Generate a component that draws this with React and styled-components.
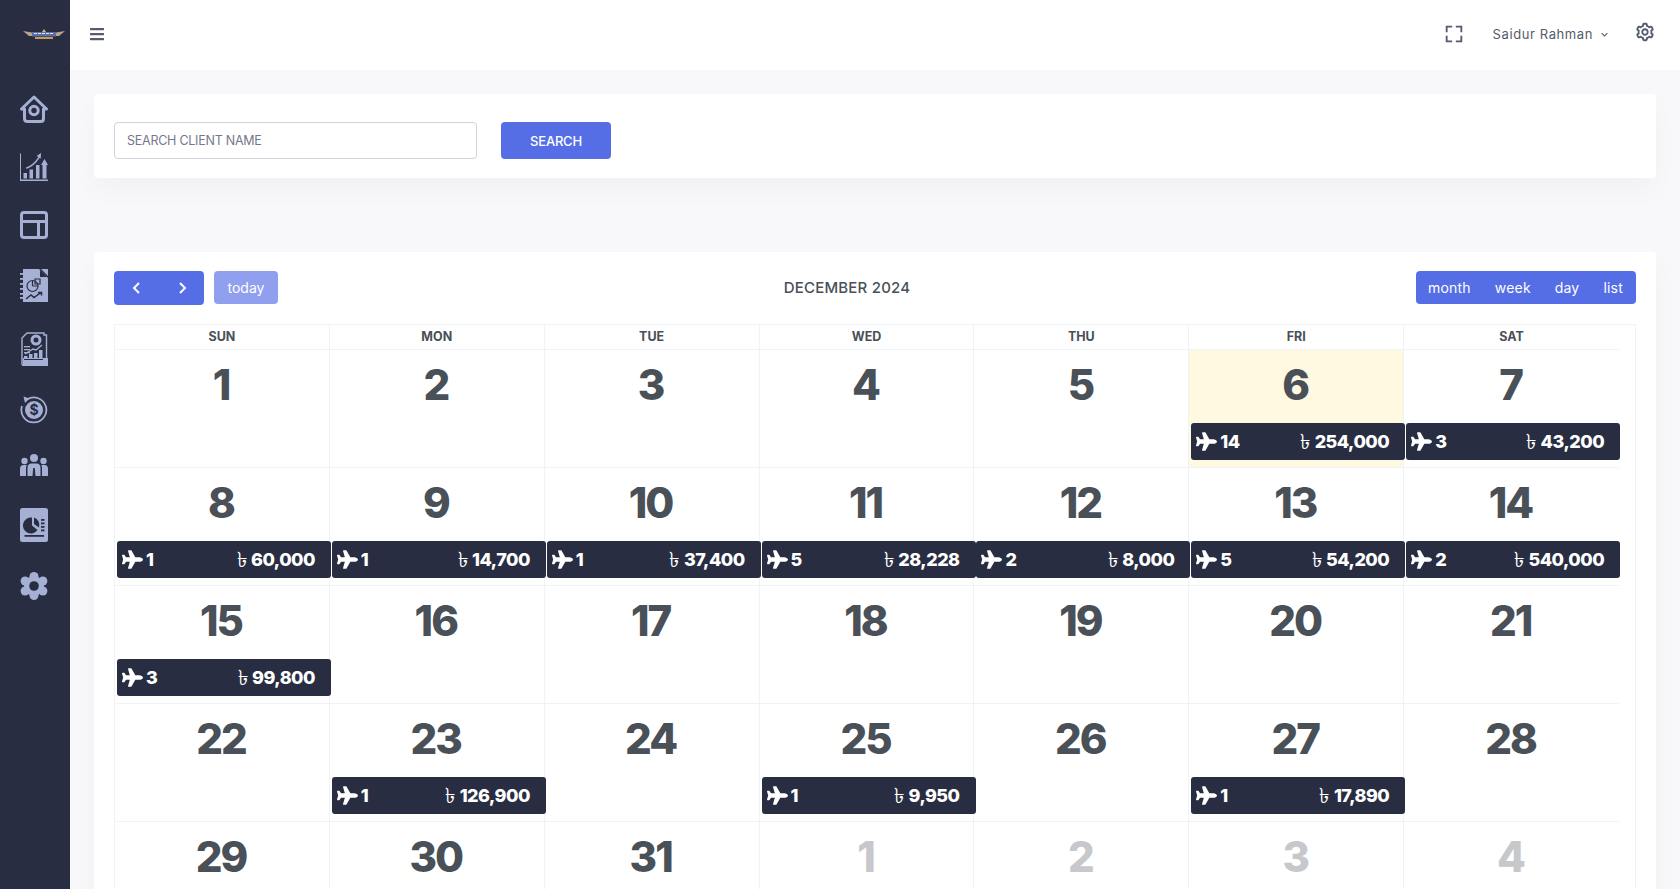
import React from 'react';
import styled, { createGlobalStyle } from 'styled-components';
import { FaBars, FaPlane } from 'react-icons/fa';
import { BiCog, BiFullscreen, BiChevronLeft, BiChevronRight } from 'react-icons/bi';
import { MdKeyboardArrowDown } from 'react-icons/md';

const COLOR = {
  SIDEBAR: '#282d41',
  ICON: '#a6b0d4',
  PRIMARY: '#556ee6',
  TEXT: '#495057',
  MUTED: '#555b6d',
  LINE: '#eff2f7',
  BG: '#f8f8fb',
  TODAY: '#fff9e1',
};

const GlobalStyle = createGlobalStyle`
  html, body {
    margin: 0;
    height: 100%;
    overflow: hidden;
    background: ${COLOR.BG};
    font-family: Inter, "Noto Sans", "DejaVu Sans", sans-serif;
    color: ${COLOR.TEXT};
  }
  * { box-sizing: border-box; }
`;

const Page = styled.div`
  display: flex;
  height: 100vh;
  overflow: hidden;
`;

const Sidebar = styled.aside`
  width: 70px;
  flex: none;
  background: ${COLOR.SIDEBAR};
  display: flex;
  flex-direction: column;
  align-items: center;
  padding-right: 2px;
`;

const LogoBox = styled.div`
  height: 95px;
  width: 100%;
  padding-top: 29px;
  padding-left: 23px;
  svg { display: block; }
`;

const Nav = styled.nav`
  display: flex;
  flex-direction: column;
  align-items: center;
  gap: 30px;
  color: ${COLOR.ICON};
  svg { display: block; }
`;

const Main = styled.div`
  flex: 1;
  min-width: 0;
  display: flex;
  flex-direction: column;
`;

const Header = styled.header`
  height: 70px;
  flex: none;
  background: #fff;
  display: flex;
  align-items: center;
  justify-content: space-between;
  padding: 0 24px 0 19px;
  color: ${COLOR.MUTED};
`;

const HeaderRight = styled.div`
  display: flex;
  align-items: center;
`;

const IconSlot = styled.div`
  display: flex;
  color: ${COLOR.MUTED};
  margin-top: ${({ $top }) => $top || 0}px;
`;

const UserName = styled.div`
  display: flex;
  align-items: center;
  margin: -2px 23px 0 28px;
  font-size: 13px;
  letter-spacing: 0.6px;
`;

const Content = styled.main`
  padding: 24px;
`;

const Card = styled.section`
  background: #fff;
  border-radius: 4px;
  box-shadow: 0 12px 24px rgba(18, 38, 63, 0.03);
`;

const SearchCard = styled(Card)`
  display: flex;
  gap: 24px;
  padding: 28px 20px;
  height: 84px;
  margin-bottom: 74px;
`;

const SearchInput = styled.input`
  width: 363px;
  height: 37px;
  border: 1px solid #ced4da;
  border-radius: 4px;
  padding: 0 12px;
  font: 400 12.5px Inter, sans-serif;
  letter-spacing: -0.25px;
  color: ${COLOR.TEXT};
  &::placeholder { color: #74788d; opacity: 1; }
`;

const SearchButton = styled.button`
  width: 110px;
  height: 37px;
  border: 0;
  border-radius: 4px;
  background: ${COLOR.PRIMARY};
  color: #fff;
  font: 500 13px Inter, sans-serif;
  letter-spacing: -0.2px;
`;

const CalendarCard = styled(Card)`
  padding: 19px 20px 0;
`;

const Toolbar = styled.div`
  display: flex;
  justify-content: space-between;
  align-items: flex-start;
  height: 34px;
  margin-bottom: 19px;
`;

const ToolbarGroup = styled.div`
  display: flex;
  gap: 10px;
`;

const NavButtons = styled.div`
  width: 90px;
  height: 34px;
  background: ${COLOR.PRIMARY};
  border-radius: 4px;
  display: flex;
  align-items: center;
  justify-content: space-around;
  color: #fff;
`;

const TodayButton = styled.div`
  width: 64px;
  height: 33px;
  background: ${COLOR.PRIMARY};
  opacity: 0.65;
  border-radius: 4px;
  color: #fff;
  font-size: 14px;
  display: flex;
  align-items: center;
  justify-content: center;
`;

const MonthTitle = styled.h2`
  margin: 7px 0 0;
  font-size: 15px;
  line-height: 20px;
  font-weight: 500;
  letter-spacing: 0.2px;
  color: ${COLOR.TEXT};
`;

const ViewSwitch = styled.div`
  width: 220px;
  height: 33px;
  background: ${COLOR.PRIMARY};
  border-radius: 4px;
  display: flex;
  align-items: center;
  justify-content: space-between;
  padding: 0 13px 0 12px;
  color: #fff;
  font-size: 14px;
  letter-spacing: 0.2px;
`;

const CalendarTable = styled.div`
  border: 1px solid ${COLOR.LINE};
  border-bottom: 0;
  padding-right: 16px;
`;

const Grid = styled.div`
  display: grid;
  grid-template-columns: repeat(7, 1fr);
`;

const DayName = styled.div`
  height: 25px;
  padding-bottom: 2px;
  border-bottom: 1px solid ${COLOR.LINE};
  border-right: ${({ $last }) => ($last ? 0 : `1px solid ${COLOR.LINE}`)};
  display: flex;
  align-items: center;
  justify-content: center;
  font-size: 12.5px;
  font-weight: 700;
  color: ${COLOR.TEXT};
`;

const DayCell = styled.div`
  height: 118px;
  min-width: 0;
  border-bottom: 1px solid ${COLOR.LINE};
  border-right: ${({ $last }) => ($last ? 0 : `1px solid ${COLOR.LINE}`)};
  background: ${({ $today }) => ($today ? COLOR.TODAY : 'transparent')};
`;

const DayNumber = styled.div`
  height: 73px;
  padding: 0 2px 5px 0;
  display: flex;
  align-items: center;
  justify-content: center;
  font-size: 42px;
  font-weight: 800;
  letter-spacing: -2px;
  color: ${({ $other }) => ($other ? '#c6c8cb' : COLOR.TEXT)};
`;

const EventBar = styled.div`
  position: relative;
  width: 214px;
  height: 37px;
  margin-left: 2px;
  padding: 0 16px 0 5px;
  background: ${COLOR.SIDEBAR};
  border-radius: 3px;
  display: flex;
  align-items: center;
  justify-content: space-between;
  color: #fff;
  font-size: 18px;
  line-height: 1;
  font-weight: 800;
  letter-spacing: -0.5px;
`;

const EventCount = styled.span`
  display: flex;
  align-items: center;
  gap: 3px;
`;

const EventAmount = styled.span`
  display: flex;
  align-items: center;
`;

const Taka = styled.span`
  font-size: 21px;
  line-height: 18px;
  font-weight: 400;
  margin-right: 5px;
`;

const HouseIcon = () => (
  <svg width="28" height="28" viewBox="0 0 28 28" fill="none" stroke="currentColor" strokeWidth="3" strokeLinejoin="round">
    <path d="M14 2L26.500 14H23.500V23.500Q23.500 26.500 20.500 26.500H7.500Q4.500 26.500 4.500 23.500V14H1.500Z" />
    <circle cx="14" cy="15.500" r="4.200" />
  </svg>
);

const ChartIcon = () => (
  <svg width="28" height="28" viewBox="0 0 28 28" fill="currentColor">
    <path d="M0 0.500H1V26.500H28V28H0Z" />
    <rect x="3.500" y="20" width="3.500" height="5.500" />
    <rect x="9.500" y="16.500" width="3.500" height="9" />
    <rect x="16" y="12" width="3.500" height="13.500" />
    <path d="M22.500 12H21L24.500 6L28 12H26.500V25.500H22.500Z" />
    <path d="M6 14.500Q13 12 18.500 4L16.500 3L21 0L20.800 5.500L19.500 5Q14 13.500 6.500 16Z" />
  </svg>
);

const LayoutIcon = () => (
  <svg width="28" height="28" viewBox="0 0 28 28" fill="none" stroke="currentColor" strokeWidth="3">
    <rect x="1.500" y="1.500" width="25" height="25" rx="2.500" />
    <path d="M1.500 10.500H26.500M18.500 10.500V26.500" />
  </svg>
);

const NotebookIcon = () => (
  <svg width="28" height="33" viewBox="0 0 28 33">
    <path d="M3 0H19L28 9V33H3Z" fill="currentColor" />
    <path d="M20 1L27 8H20Z" fill={COLOR.SIDEBAR} />
    <path d="M21 0L28 7V0Z" fill="currentColor" />
    <g fill="currentColor">
      <rect x="0" y="4" width="4" height="1.800" />
      <rect x="0" y="9" width="4" height="1.800" />
      <rect x="0" y="14" width="4" height="1.800" />
      <rect x="0" y="19" width="4" height="1.800" />
      <rect x="0" y="24" width="4" height="1.800" />
      <rect x="0" y="28" width="4" height="1.800" />
    </g>
    <g fill="none" stroke={COLOR.SIDEBAR} strokeWidth="1.200">
      <circle cx="12.500" cy="17" r="5.500" />
      <path d="M12.500 17V11.500M12.500 17H18" />
      <path d="M15 10H20V15H15Z" />
      <path d="M6 30L11 26L14 28.500L21 23.500M18 23.500H21.500V26.500" strokeWidth="1.500" />
    </g>
  </svg>
);

const ReportIcon = () => (
  <svg width="28" height="34" viewBox="0 0 28 34">
    <path d="M2 33V6L7 1H24V3H26.500V33.500H2" fill="none" stroke="currentColor" strokeWidth="1.400" />
    <path d="M3 26H28V34H3Z" fill="currentColor" />
    <circle cx="16" cy="8" r="5.500" fill="currentColor" />
    <circle cx="16" cy="8" r="2.500" fill={COLOR.SIDEBAR} />
    <g fill="currentColor">
      <rect x="4" y="14" width="6" height="1.300" />
      <rect x="4" y="17" width="6" height="1.300" />
      <rect x="4" y="20" width="6" height="1.300" />
      <rect x="4" y="24" width="3.500" height="4" />
      <rect x="9" y="22" width="3.500" height="6" />
      <rect x="14" y="21" width="3.500" height="7" />
      <rect x="19" y="18" width="3.500" height="10" />
    </g>
    <path d="M5 22L13 17L16 18L22 13" fill="none" stroke="currentColor" strokeWidth="1.400" />
    <rect x="4" y="27" width="19" height="1" fill={COLOR.SIDEBAR} />
  </svg>
);

const DollarIcon = () => (
  <svg width="28" height="28" viewBox="0 0 28 28">
    <path d="M7 3.500A12.500 12.500 0 1 1 2 10" fill="none" stroke="currentColor" strokeWidth="1.800" />
    <path d="M3.500 0.500L9.500 2.500L5 7Z" fill="currentColor" />
    <circle cx="14" cy="14" r="9" fill="currentColor" />
    <text x="14" y="18.800" textAnchor="middle" fontSize="14" fontWeight="700" fill={COLOR.SIDEBAR} fontFamily="Inter, sans-serif">$</text>
  </svg>
);

const UsersIcon = () => (
  <svg width="28" height="24" viewBox="0 0 28 24" fill="currentColor">
    <circle cx="14" cy="4" r="4" />
    <circle cx="4.500" cy="7" r="3.200" />
    <circle cx="23.500" cy="7" r="3.200" />
    <path d="M7.500 22V14Q7.500 9.500 11.500 9.500H16.500Q20.500 9.500 20.500 14V22H15.500L14.800 14H13.200L12.500 22Z" />
    <path d="M0 22V15Q0 11 3.500 11H6.800Q6 12.500 6 14V22Z" />
    <path d="M28 22V15Q28 11 24.500 11H21.200Q22 12.500 22 14V22Z" />
  </svg>
);

const DocIcon = () => (
  <svg width="28" height="34" viewBox="0 0 28 34">
    <rect width="28" height="34" rx="2.500" fill="currentColor" />
    <path d="M12 9.500V17.500L17.500 22A8 8 0 1 1 12 9.500Z" fill={COLOR.SIDEBAR} />
    <path d="M14 9.500A8 8 0 0 1 19 19.500L14 16Z" fill={COLOR.SIDEBAR} />
    <g fill={COLOR.SIDEBAR}>
      <rect x="21" y="11" width="3.500" height="1.800" />
      <rect x="21" y="14.500" width="3.500" height="1.800" />
      <rect x="21" y="18" width="3.500" height="1.800" />
      <rect x="21" y="21.500" width="3.500" height="1.800" />
      <rect x="4.500" y="27" width="19.500" height="1.800" />
    </g>
  </svg>
);

const GearIcon = () => (
  <svg width="28" height="28" viewBox="0 0 28 28">
    <g fill="currentColor">
      <circle cx="14" cy="14" r="10" />
      <circle cx="14" cy="4.500" r="4.500" />
      <circle cx="14" cy="23.500" r="4.500" />
      <circle cx="5.100" cy="9" r="4.500" />
      <circle cx="22.900" cy="9" r="4.500" />
      <circle cx="5.100" cy="19" r="4.500" />
      <circle cx="22.900" cy="19" r="4.500" />
    </g>
    <circle cx="14" cy="14" r="4.800" fill={COLOR.SIDEBAR} />
  </svg>
);

const Logo = () => (
  <svg width="42" height="11" viewBox="0 0 42 11">
    <path d="M0 2L9 3.500L12 7H6Z" fill="#b9a58c" />
    <path d="M42 2L33 3.500L30 7H36Z" fill="#b9a58c" />
    <rect x="9" y="3" width="24" height="4.500" fill="#5c6fa8" />
    <path d="M19 3L21 0L23 3Z" fill="#c7b79a" />
    <path d="M11 4.500H31" stroke="#dde2f0" strokeWidth="1" strokeDasharray="3 1" />
    <rect x="12" y="8" width="18" height="2" fill="#c79a4d" />
  </svg>
);

const WEEK_DAYS = ['SUN', 'MON', 'TUE', 'WED', 'THU', 'FRI', 'SAT'];

const EVENTS = {
  6: [14, '254,000'],
  7: [3, '43,200'],
  8: [1, '60,000'],
  9: [1, '14,700'],
  10: [1, '37,400'],
  11: [5, '28,228'],
  12: [2, '8,000'],
  13: [5, '54,200'],
  14: [2, '540,000'],
  15: [3, '99,800'],
  23: [1, '126,900'],
  25: [1, '9,950'],
  27: [1, '17,890'],
};

const DAYS = [
  ...Array.from({ length: 31 }, (_, i) => ({ day: i + 1 })),
  ...[1, 2, 3, 4].map((day) => ({ day, other: true })),
];

const App = () => (
  <Page>
    <GlobalStyle />
    <Sidebar>
      <LogoBox>
        <Logo />
      </LogoBox>
      <Nav>
        <HouseIcon />
        <ChartIcon />
        <LayoutIcon />
        <NotebookIcon />
        <ReportIcon />
        <DollarIcon />
        <UsersIcon />
        <DocIcon />
        <GearIcon />
      </Nav>
    </Sidebar>
    <Main>
      <Header>
        <IconSlot $top={-3}>
          <FaBars size={16} />
        </IconSlot>
        <HeaderRight>
          <IconSlot $top={-2}>
            <BiFullscreen size={22} />
          </IconSlot>
          <UserName>
            Saidur Rahman
            <MdKeyboardArrowDown size={13} style={{ marginLeft: 5 }} />
          </UserName>
          <IconSlot $top={-6}>
            <BiCog size={22} />
          </IconSlot>
        </HeaderRight>
      </Header>
      <Content>
        <SearchCard>
          <SearchInput placeholder="SEARCH CLIENT NAME" />
          <SearchButton>SEARCH</SearchButton>
        </SearchCard>
        <CalendarCard>
          <Toolbar>
            <ToolbarGroup>
              <NavButtons>
                <BiChevronLeft size={24} />
                <BiChevronRight size={24} />
              </NavButtons>
              <TodayButton>today</TodayButton>
            </ToolbarGroup>
            <MonthTitle>DECEMBER 2024</MonthTitle>
            <ViewSwitch>
              <span>month</span>
              <span>week</span>
              <span>day</span>
              <span>list</span>
            </ViewSwitch>
          </Toolbar>
          <CalendarTable>
            <Grid>
              {WEEK_DAYS.map((name, i) => (
                <DayName key={name} $last={i === 6}>
                  {name}
                </DayName>
              ))}
              {DAYS.map(({ day, other }, i) => {
                const event = !other && EVENTS[day];
                return (
                  <DayCell key={i} $last={i % 7 === 6} $today={!other && day === 6}>
                    <DayNumber $other={other}>{day}</DayNumber>
                    {event && (
                      <EventBar>
                        <EventCount>
                          <FaPlane size={21} />
                          {event[0]}
                        </EventCount>
                        <EventAmount>
                          <Taka>৳</Taka>
                          {event[1]}
                        </EventAmount>
                      </EventBar>
                    )}
                  </DayCell>
                );
              })}
            </Grid>
          </CalendarTable>
        </CalendarCard>
      </Content>
    </Main>
  </Page>
);

export default App;
